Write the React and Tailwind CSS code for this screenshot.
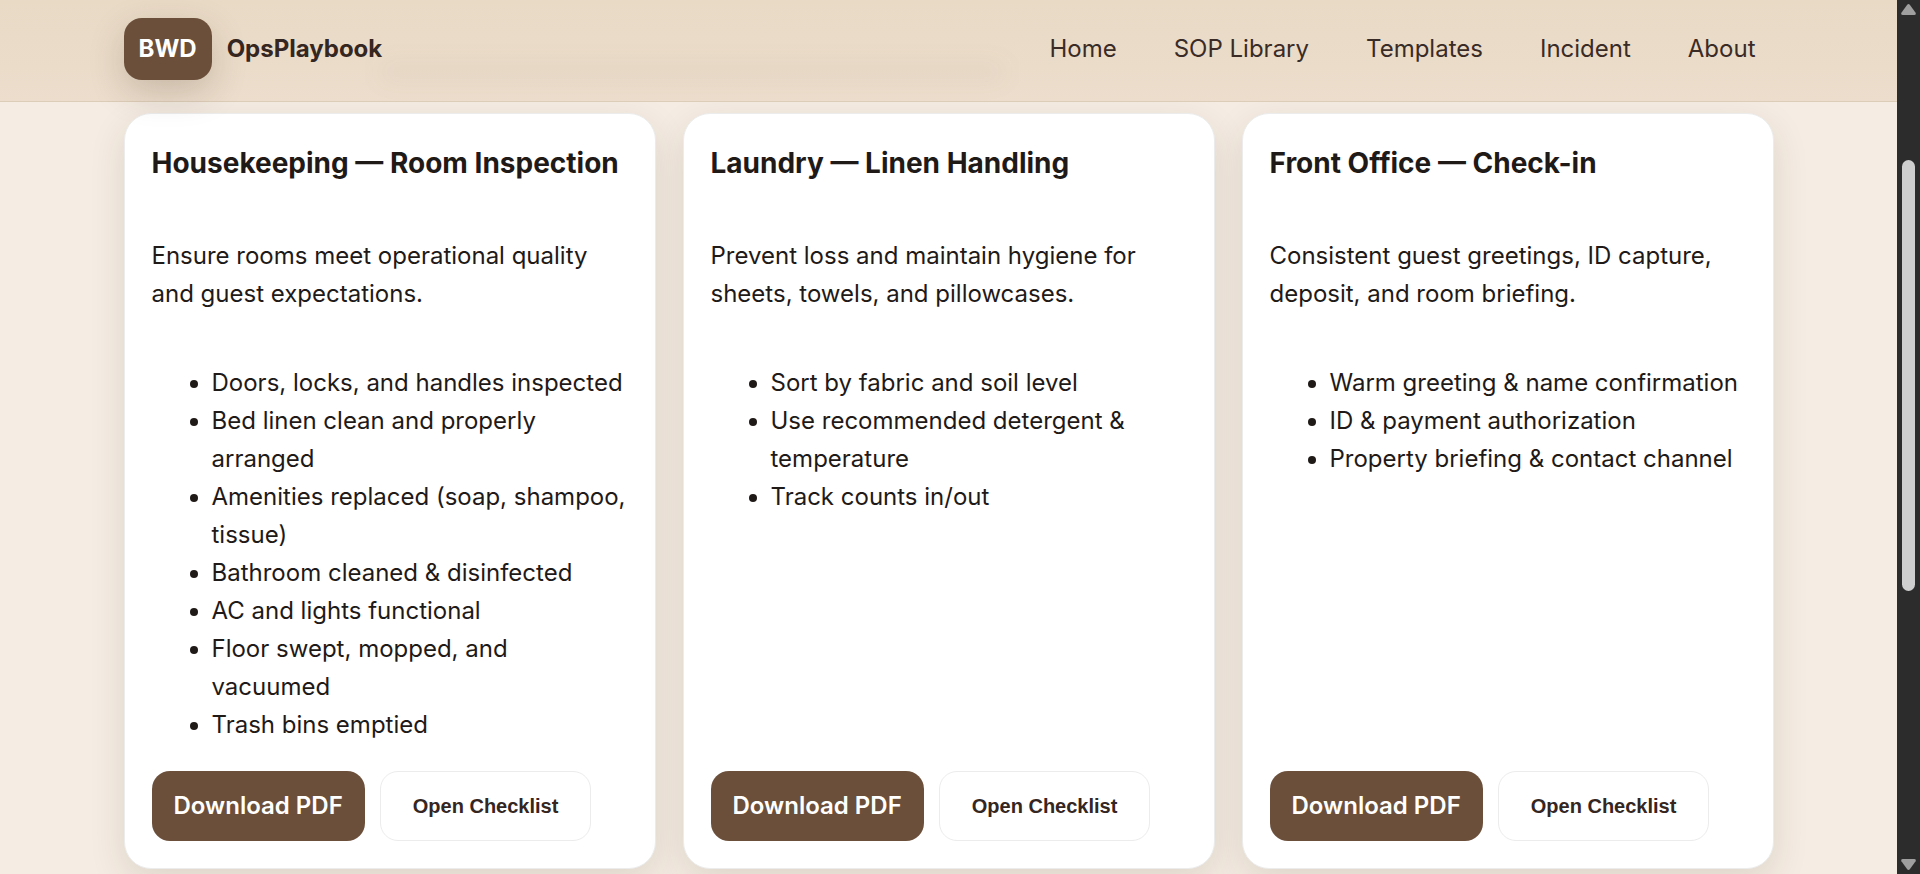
const links = ["Home", "SOP Library", "Templates", "Incident", "About"];

const procedures = [
  {
    title: "Housekeeping — Room Inspection",
    summary: "Ensure rooms meet operational quality and guest expectations.",
    steps: [
      "Doors, locks, and handles inspected",
      "Bed linen clean and properly arranged",
      "Amenities replaced (soap, shampoo, tissue)",
      "Bathroom cleaned & disinfected",
      "AC and lights functional",
      "Floor swept, mopped, and vacuumed",
      "Trash bins emptied",
    ],
  },
  {
    title: "Laundry — Linen Handling",
    summary: "Prevent loss and maintain hygiene for sheets, towels, and pillowcases.",
    steps: [
      "Sort by fabric and soil level",
      "Use recommended detergent & temperature",
      "Track counts in/out",
    ],
  },
  {
    title: "Front Office — Check-in",
    summary: "Consistent guest greetings, ID capture, deposit, and room briefing.",
    steps: [
      "Warm greeting & name confirmation",
      "ID & payment authorization",
      "Property briefing & contact channel",
    ],
  },
];

function Header() {
  return (
    <header className="relative z-10 border-b border-[#dccdb8] bg-linear-to-b from-[#e9dac6] to-[#ecddcc]">
      <div className="absolute top-[64px] left-[20%] h-4 w-[33%] rounded-full bg-[#6b4f3a]/5 blur-md" />
      <div className="relative mx-auto flex max-w-[1650px] items-center justify-between pt-[18px] pb-[21px]">
        <a href="#home" className="flex items-center gap-[15px] font-bold text-[#35261f]">
          <span className="rounded-[18px] bg-[#6b4f3a] px-[15px] py-3 text-white shadow-[0_12px_36px_rgba(60,40,20,0.2)]">
            BWD
          </span>
          <span>OpsPlaybook</span>
        </a>
        <nav className="flex gap-[21px]">
          {links.map((link) => (
            <a key={link} href="#" className="px-[18px] text-[#3a2b26]">
              {link}
            </a>
          ))}
        </nav>
      </div>
    </header>
  );
}

function ProcedureCard({ title, summary, steps }) {
  return (
    <article className="flex flex-col rounded-[27px] border border-[#ececec] bg-white p-[27px] shadow-[0_12px_36px_rgba(60,40,20,0.12)]">
      <h3 className="mb-[51px] text-[28px] leading-[45px] font-bold">{title}</h3>
      <p className="mb-[51px]">{summary}</p>
      <ul className="mb-[27px] list-disc pl-[60px]">
        {steps.map((step) => (
          <li key={step}>{step}</li>
        ))}
      </ul>
      <div className="mt-auto flex gap-[15px]">
        <button type="button" className="h-[70px] rounded-[18px] bg-[#6b4f3a] px-[22px] font-semibold text-white">
          Download PDF
        </button>
        <button
          type="button"
          className="h-[70px] rounded-[18px] border border-[#ececec] bg-white px-8 font-['Liberation_Sans',sans-serif] text-[20px] font-bold text-[#35261f]"
        >
          Open Checklist
        </button>
      </div>
    </article>
  );
}

function ScrollRail() {
  return (
    <div className="flex w-[23px] shrink-0 flex-col items-center justify-between bg-[#2c2c2c] pt-1 pb-1" aria-hidden="true">
      <svg width="15" height="11" viewBox="0 0 15 11" fill="#9f9f9f">
        <path d="M6.2.8Q7.5-.6 8.8.8L14.6 8.8Q15.4 11 13.2 11H1.8Q-.4 11 .4 8.8Z" />
      </svg>
      <div className="mt-[145px] mb-auto h-[431px] w-[13px] rounded-full bg-[#cfcfcf]" />
      <svg width="15" height="11" viewBox="0 0 15 11" fill="#9f9f9f">
        <path d="M6.2 10.2Q7.5 11.6 8.8 10.2L14.6 2.2Q15.4 0 13.2 0H1.8Q-.4 0 .4 2.2Z" />
      </svg>
    </div>
  );
}

export default function App() {
  return (
    <div className="flex h-screen overflow-hidden bg-[#f5ece3] font-[Inter,sans-serif] text-[24px] leading-[38px] text-[#1f1a17]">
      <div className="min-w-0 flex-1">
        <Header />
        <main className="mx-auto grid max-w-[1650px] grid-cols-3 gap-[27px] pt-[11px] pb-10">
          {procedures.map((procedure) => (
            <ProcedureCard key={procedure.title} {...procedure} />
          ))}
        </main>
      </div>
      <ScrollRail />
    </div>
  );
}
